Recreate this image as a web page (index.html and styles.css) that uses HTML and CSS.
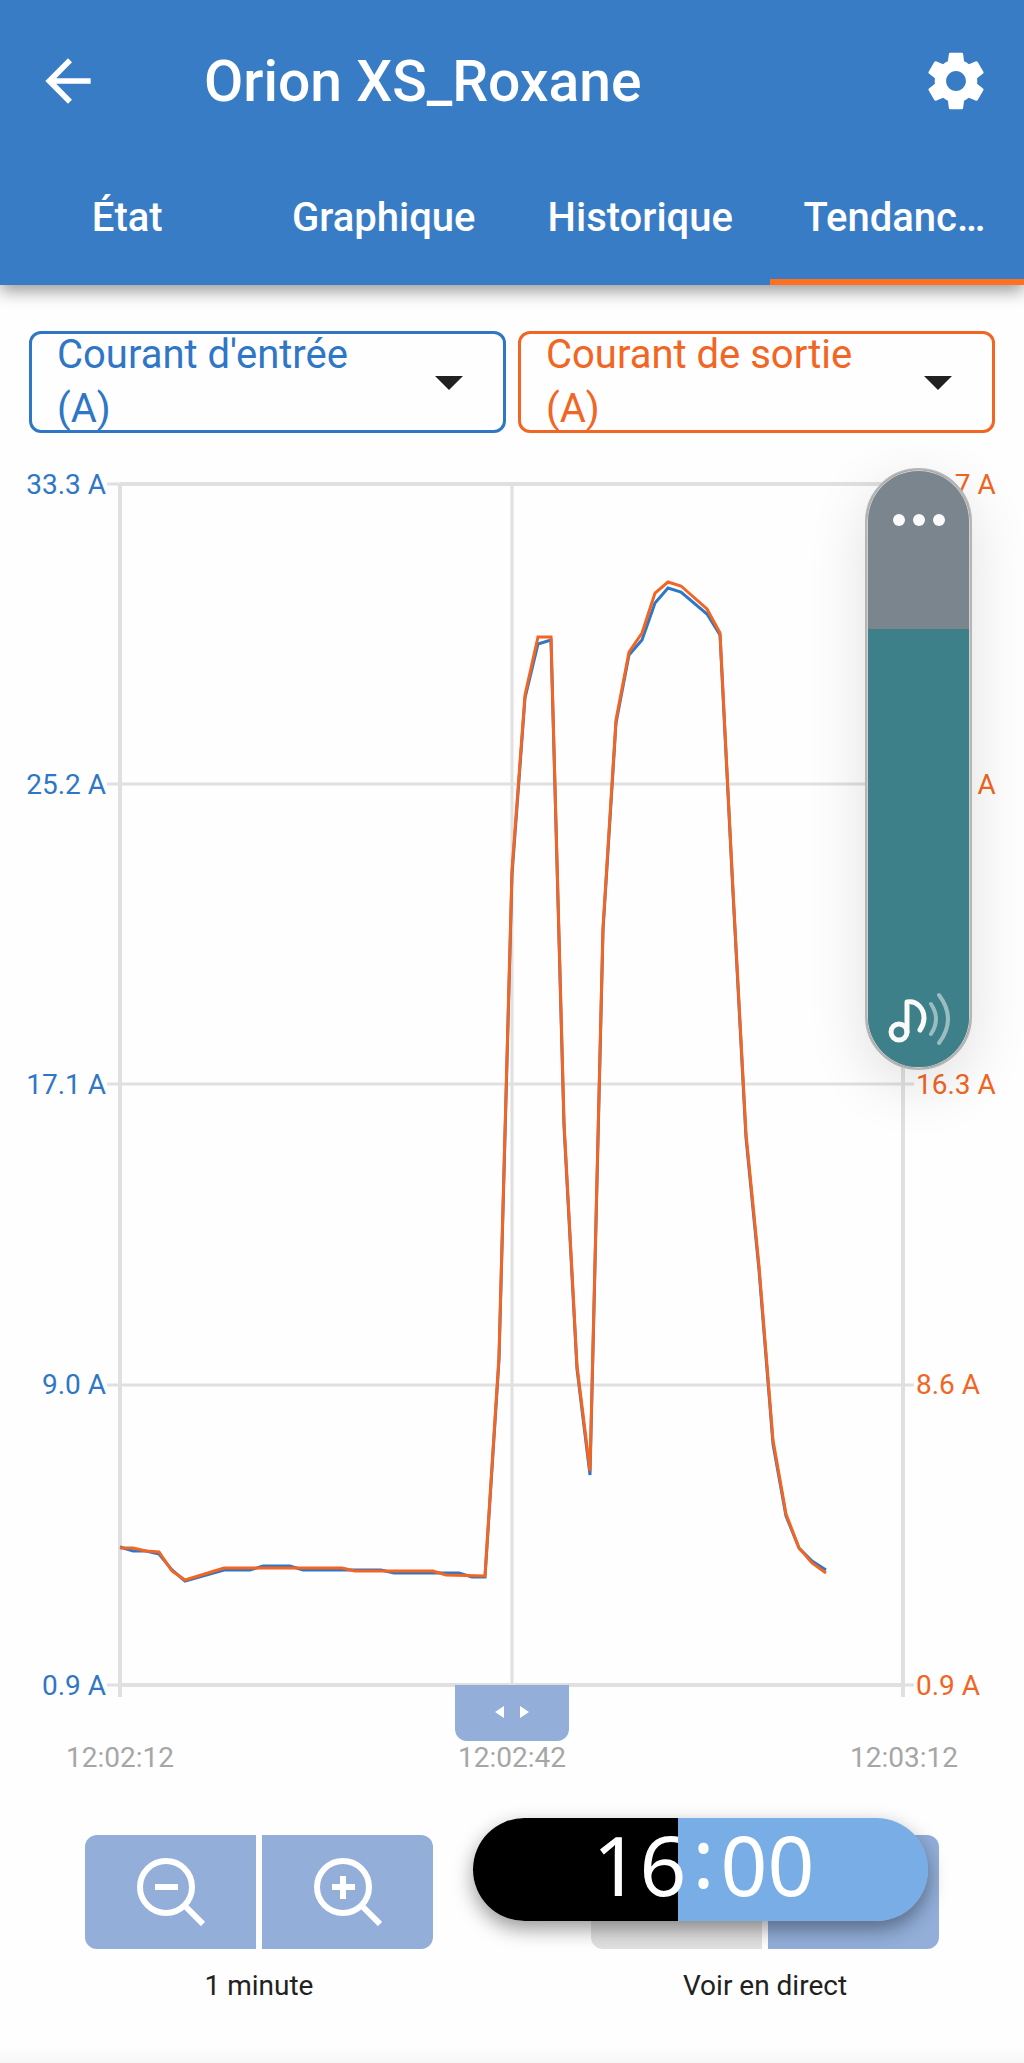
FILE: index.html
```html
<!DOCTYPE html>
<html lang="fr">
<head>
  <meta charset="UTF-8" />
  <meta name="viewport" content="width=device-width, initial-scale=1.0"/>
  <title>Orion XS_Roxane</title>
  <link rel="stylesheet" href="styles.css">
</head>
<body>

  <header class="header">
    <div class="topbar">
      <button class="icon-btn" aria-label="Retour">
        <svg viewBox="0 0 24 24"><path d="M20 11H7.83l5.59-5.59L12 4l-8 8 8 8 1.41-1.41L7.83 13H20v-2z"/></svg>
      </button>
      <h1 class="title">Orion XS_Roxane</h1>
      <button class="icon-btn" aria-label="Paramètres">
        <svg viewBox="0 0 24 24"><path d="M19.43 12.98c.04-.32.07-.64.07-.98s-.03-.66-.07-.98l2.11-1.65c.19-.15.24-.42.12-.64l-2-3.46c-.12-.22-.39-.3-.61-.22l-2.49 1c-.52-.4-1.08-.73-1.69-.98l-.38-2.65C14.46 2.18 14.25 2 14 2h-4c-.25 0-.46.18-.49.42l-.38 2.65c-.61.25-1.17.59-1.69.98l-2.49-1c-.23-.09-.49 0-.61.22l-2 3.46c-.13.22-.07.49.12.64l2.11 1.65c-.04.32-.07.65-.07.98s.03.66.07.98l-2.11 1.65c-.19.15-.24.42-.12.64l2 3.46c.12.22.39.3.61.22l2.49-1c.52.4 1.08.73 1.69.98l.38 2.65c.03.24.24.42.49.42h4c.25 0 .46-.18.49-.42l.38-2.65c.61-.25 1.17-.59 1.69-.98l2.49 1c.23.09.49 0 .61-.22l2-3.46c.12-.22.07-.49-.12-.64l-2.11-1.65zM12 15.5c-1.93 0-3.5-1.57-3.5-3.5s1.57-3.5 3.5-3.5 3.5 1.57 3.5 3.5-1.57 3.5-3.5 3.5z"/></svg>
      </button>
    </div>
    <nav class="tabs">
      <button class="tab">État</button>
      <button class="tab">Graphique</button>
      <button class="tab">Historique</button>
      <button class="tab active">Tendances</button>
    </nav>
  </header>

  <main class="main">
    <div class="selects">
      <div class="select-box input">
        <select aria-label="Série de gauche">
          <button><selectedcontent></selectedcontent></button>
          <option>Courant d'entrée (A)</option>
        </select>
      </div>
      <div class="select-box output">
        <select aria-label="Série de droite">
          <button><selectedcontent></selectedcontent></button>
          <option>Courant de sortie (A)</option>
        </select>
      </div>
    </div>

    <div class="chart">
      <div class="axis left">
        <span>33.3 A</span>
        <span>25.2 A</span>
        <span>17.1 A</span>
        <span>9.0 A</span>
        <span>0.9 A</span>
      </div>
      <div class="plot">
        <svg viewBox="120 484 783 1201" preserveAspectRatio="none">
          <g class="grid">
            <path d="M107 484H914M107 784H914M107 1084H914M107 1385H914M107 1685H914M512 484V1685"/>
            <path class="edge" d="M120 484V1697M903 484V1697M120 484H903M120 1685H903"/>
          </g>
          <polyline class="line input" points="120,1547 133,1551 146,1551 159,1554 172,1570 185,1581 224,1570 250,1570 263,1566 290,1566 303,1570 381,1570 394,1573 446,1573 459,1573 472,1577 485,1577 499,1360 512,875 525,698 538,644 551,640 564,1126 577,1369 590,1475 603,931 616,723 629,655 642,640 655,603 668,588 681,592 707,614 720,635 733,893 746,1138 759,1270 773,1444 786,1516 799,1548 812,1561 826,1570"/>
          <polyline class="line output" points="120,1548 133,1548 146,1551 159,1552 172,1571 185,1580 224,1568 342,1568 355,1571 433,1571 446,1575 485,1576 499,1356 512,870 525,695 538,637 551,637 564,1122 577,1366 590,1471 603,927 616,720 629,652 642,633 655,593 668,582 681,586 707,609 720,633 733,890 746,1134 759,1266 773,1440 786,1514 799,1548 812,1563 826,1573"/>
        </svg>
      </div>
      <div class="axis right">
        <span>31.7 A</span>
        <span>24.0 A</span>
        <span>16.3 A</span>
        <span>8.6 A</span>
        <span>0.9 A</span>
      </div>
    </div>

    <button class="handle" aria-label="Déplacer">
      <svg viewBox="0 0 34 12"><path d="M9 0v12L0 6zM25 0v12l9-6z"/></svg>
    </button>
    <div class="times">
      <span>12:02:12</span>
      <span>12:02:42</span>
      <span>12:03:12</span>
    </div>

    <div class="controls">
      <div class="control">
        <div class="btn-group">
          <button class="btn" aria-label="Zoom arrière">
            <svg viewBox="0 0 68 68"><circle cx="29" cy="29" r="26"/><path d="M48 48l18 18M18 29h23"/></svg>
          </button>
          <button class="btn" aria-label="Zoom avant">
            <svg viewBox="0 0 68 68"><circle cx="29" cy="29" r="26"/><path d="M48 48l18 18M18 29h23M29 18v23"/></svg>
          </button>
        </div>
        <div class="label">1 minute</div>
      </div>
      <div class="control">
        <div class="btn-group">
          <button class="btn disabled" aria-label="Pause" disabled></button>
          <button class="btn" aria-label="Lecture"></button>
        </div>
        <div class="label">Voir en direct</div>
      </div>
    </div>
  </main>

  <!-- system overlays -->
  <div class="volume">
    <button class="more" aria-label="Plus"><i></i><i></i><i></i></button>
    <div class="level">
      <svg viewBox="0 0 64 56">
        <circle cx="12" cy="41" r="8"/>
        <path d="M20 41V11C30 9 37 18 37 27q0 6-4 12"/>
        <path class="wave" d="M44 13q10 15 0 30M52 4q18 24 0 48"/>
      </svg>
    </div>
  </div>

  <div class="clock">
    <span>16</span><span class="colon">:</span><span>00</span>
  </div>

</body>
</html>
```
FILE: styles.css
```css
* {
  box-sizing: border-box;
}

body {
  margin: 0;
  min-height: 100vh;
  display: flex;
  flex-direction: column;
  position: relative;
  background: linear-gradient(to top, #f6f6f6, #fefefe 16px);
  font-family: Roboto, sans-serif;
  color: #212121;
}

button {
  border: none;
  padding: 0;
  font-family: inherit;
  cursor: pointer;
}

/* Header */
.header {
  background: #387cc5;
  color: #fff;
  box-shadow: 0 6px 16px rgba(0, 0, 0, 0.4);
}

.topbar {
  height: 162px;
  padding: 0 34px;
  display: flex;
  align-items: center;
}

.icon-btn {
  width: 68px;
  height: 68px;
  background: none;
}

.icon-btn svg {
  display: block;
  fill: #fff;
}

.title {
  flex: 1;
  margin: 0;
  padding-left: 102px;
  font-size: 57px;
  font-weight: 500;
}

.tabs {
  display: grid;
  grid-template-columns: repeat(4, minmax(0, 1fr));
  gap: 2px;
}

.tab {
  height: 123px;
  padding: 0 34px 6px;
  border-bottom: 6px solid transparent;
  background: none;
  color: #fff;
  font-size: 40px;
  font-weight: 500;
  overflow: hidden;
  text-overflow: ellipsis;
  white-space: nowrap;
}

.tab.active {
  border-color: #ff7020;
}

/* Content */
.main {
  flex: 1;
  display: flex;
  flex-direction: column;
  padding-top: 46px;
}

.selects {
  display: grid;
  grid-template-columns: 1fr 1fr;
  gap: 12px;
  padding: 0 29px;
}

.select-box {
  height: 102px;
  border: 3px solid;
  border-radius: 12px;
  display: flex;
  align-items: center;
  position: relative;
  overflow: hidden;
}

.select-box::after {
  content: "";
  position: absolute;
  right: 40px;
  top: 42px;
  border: 14px solid transparent;
  border-top-color: #212121;
  border-bottom: 0;
  pointer-events: none;
}

.select-box.input {
  color: #2f77c6;
}

.select-box.output {
  color: #f26522;
}

select {
  appearance: none;
  appearance: base-select;
  width: 100%;
  height: 108px;
  flex-shrink: 0;
  padding: 0 120px 0 25px;
  border: none;
  background: none;
  color: inherit;
  font-family: inherit;
  font-size: 40px;
  line-height: 54px;
  white-space: normal;
}

select::picker-icon {
  display: none;
}

select button {
  text-align: left;
}

/* Chart */
.chart {
  flex: 1;
  display: grid;
  grid-template-columns: 120px 1fr 121px;
  margin-top: 51px;
  font-size: 28px;
}

.axis {
  display: flex;
  flex-direction: column;
  justify-content: space-between;
}

.axis span {
  display: flex;
  align-items: center;
  height: 0;
}

.axis.left {
  align-items: flex-end;
  padding-right: 14px;
  color: #2f77c6;
}

.axis.right {
  padding-left: 13px;
  color: #f26522;
}

.plot {
  position: relative;
}

.plot svg {
  position: absolute;
  width: 100%;
  height: 100%;
  overflow: visible;
}

.grid path {
  fill: none;
  stroke: #e0e0e0;
  stroke-width: 3;
}

.grid .edge {
  stroke-width: 4;
}

.line {
  fill: none;
  stroke-width: 3;
}

.line.input {
  stroke: #2f77c6;
}

.line.output {
  stroke: #f26522;
}

.handle {
  width: 114px;
  height: 56px;
  align-self: center;
  background: #92aed9;
  border-radius: 0 0 12px 12px;
  z-index: 1;
}

.handle svg {
  width: 34px;
  fill: #fff;
}

.times {
  display: flex;
  justify-content: space-between;
  padding: 0 66px;
  font-size: 28px;
  line-height: 34px;
  color: #a6a6a6;
}

/* Bottom controls */
.controls {
  display: flex;
  justify-content: space-between;
  padding: 60px 85px;
}

.btn-group {
  display: flex;
  gap: 6px;
}

.btn {
  width: 171px;
  height: 114px;
  display: flex;
  align-items: center;
  justify-content: center;
  background: #92aed9;
}

.btn:first-child {
  border-radius: 12px 0 0 12px;
}

.btn:last-child {
  border-radius: 0 12px 12px 0;
}

.btn.disabled {
  background: #e0e0e0;
}

.btn svg {
  width: 68px;
  fill: none;
  stroke: #fff;
  stroke-width: 6;
}

.label {
  margin-top: 20px;
  font-size: 28px;
  line-height: 34px;
  text-align: center;
}

/* Volume overlay */
.volume {
  position: absolute;
  top: 468px;
  right: 52px;
  width: 107px;
  height: 602px;
  display: flex;
  flex-direction: column;
  border: 2px solid #b5b5b5;
  border-radius: 54px;
  background: #7b858d;
  box-shadow: 0 16px 60px rgba(0, 0, 0, 0.12), inset 0 0 0 1px #d0d0d0;
  overflow: hidden;
}

.more {
  height: 159px;
  padding-bottom: 60px;
  display: flex;
  align-items: center;
  justify-content: center;
  gap: 8px;
  background: none;
}

.more i {
  width: 12px;
  height: 12px;
  border-radius: 50%;
  background: #fafafa;
}

.level {
  flex: 1;
  margin: 0 1px 1px;
  padding-bottom: 20px;
  display: flex;
  align-items: flex-end;
  justify-content: center;
  background: #3d808a;
  border-radius: 0 0 51px 51px;
}

.level svg {
  width: 64px;
  fill: none;
  stroke: #fafafa;
  stroke-width: 5;
  stroke-linecap: round;
  stroke-linejoin: round;
}

.level .wave {
  stroke-width: 4;
  opacity: 0.5;
}

/* Clock overlay */
.clock {
  position: absolute;
  right: 96px;
  bottom: 142px;
  width: 455px;
  height: 103px;
  padding: 0 0 10px 6px;
  display: flex;
  align-items: center;
  justify-content: center;
  border-radius: 52px;
  background: linear-gradient(to right, #000 45%, #78ade6 45%);
  box-shadow: 0 8px 20px rgba(0, 0, 0, 0.4);
  color: #fff;
  font-family: "Noto Sans", sans-serif;
  font-size: 82px;
  line-height: 103px;
  z-index: 2;
}

.colon {
  padding: 0 6px 16px;
}
```
